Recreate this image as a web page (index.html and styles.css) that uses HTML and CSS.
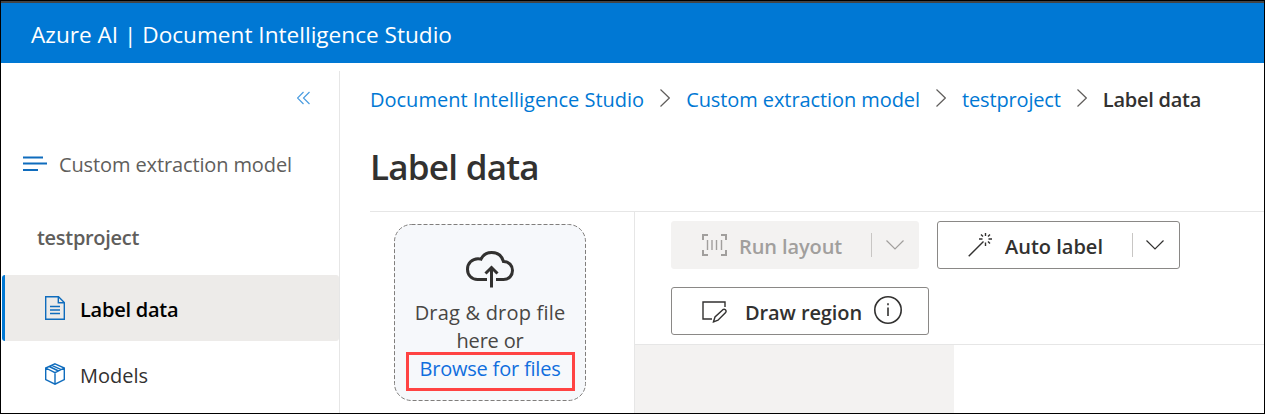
FILE: index.html
```
<!DOCTYPE html>
<html lang="en">
<head>
<meta charset="utf-8">
<title>Document Intelligence Studio</title>
<link rel="stylesheet" href="styles.css">
</head>
<body>
<div class="app">
  <header class="topbar"><span class="brand">Azure AI | Document Intelligence Studio</span></header>
  <div class="shell">
    <aside class="sidebar">
      <div class="collapse">
        <svg width="14" height="14" viewBox="0 0 14 14" class="line blue thin"><path d="M6.500 1 .5 7l6 6M12.500 1 6.500 7l6 6"/></svg>
      </div>
      <div class="model-type">
        <svg width="24" height="16" viewBox="0 0 24 16" class="line blue bars"><path d="M0 1.500h20M0 7.500h24M0 14h15"/></svg>
        <span class="t-type">Custom extraction model</span>
      </div>
      <div class="project">testproject</div>
      <nav class="nav">
        <a class="nav-item active">
          <svg width="20" height="24" viewBox="0 0 20 24" class="line blue"><path d="M.7.7H13.5L19.3 6.5V23.3H.7ZM13.3.7V6.7H19.3M5 10.500H15M5 14H15M5 17.500H15"/></svg>
          <span class="t-active">Label data</span>
        </a>
        <a class="nav-item">
          <svg width="20" height="22" viewBox="0 0 20 22" class="line blue"><path d="M10 .8 19.3 5V16.5L10 21.2.7 16.5V5ZM.7 5 10 9.7 19.3 5M10 9.700V21.200M4.200 3.500 13.500 8M6.800 2.300 16.200 6.700"/></svg>
          <span class="t-models">Models</span>
        </a>
      </nav>
    </aside>
    <main class="main">
      <div class="crumbs">
        <a class="c1">Document Intelligence Studio</a>
        <svg width="10" height="18" viewBox="0 0 10 18" class="line gray thin"><path d="M.5.5 9.3 9 .5 17.5"/></svg>
        <a class="c2">Custom extraction model</a>
        <svg width="10" height="18" viewBox="0 0 10 18" class="line gray thin"><path d="M.5.5 9.3 9 .5 17.5"/></svg>
        <a class="c3">testproject</a>
        <svg width="10" height="18" viewBox="0 0 10 18" class="line gray thin"><path d="M.5.5 9.3 9 .5 17.5"/></svg>
        <span class="current">Label data</span>
      </div>
      <h1 class="title">Label data</h1>
      <div class="workspace">
        <section class="files">
          <div class="drop">
            <svg class="outline" width="192" height="177" viewBox="0 0 192 177"><rect x=".5" y=".5" width="191" height="176" rx="17"/></svg>
            <svg width="48" height="37" viewBox="0 0 48 37" class="cloud"><path d="M21 28.5H11.500C5.500 28.500 1.500 24 1.500 18.200S6 7.700 12 7.700c1.200 0 2.200.2 3 .5C17 4 21 1.500 25.500 1.500c6 0 10.500 3.500 12 9 5.500 0 9 4 9 9s-3.500 9-9 9H30"/><path d="M25.500 36.500V17M19.500 22.500 25.500 16.500 31.500 22.500"/></svg>
            <div class="drop-text drag">Drag &amp; drop file</div>
            <div class="drop-text here">here or</div>
            <a class="browse">Browse for files</a>
          </div>
        </section>
        <section class="editor">
          <div class="tools">
            <button class="btn disabled">
              <svg width="25" height="22" viewBox="0 0 25 22" class="line scan"><path class="corners" d="M6 1H1v5M19 1h5v5M6 21H1v-5M19 21h5v-5"/><path d="M5.500 6v10M10 6v10M14.500 6v10M19.500 6v10"/></svg>
              <span class="t-run">Run layout</span>
              <i class="split"></i>
              <svg width="18" height="10" viewBox="0 0 18 10" class="line thin"><path d="M.5.5 9 9 17.500.5"/></svg>
            </button>
            <button class="btn auto">
              <svg width="25" height="25" viewBox="0 0 25 25" class="line wand"><path d="M.7 24.300 15.500 9.500M17.500 1v3M17.500 10.500v3.500M11 7h3.500M20.500 7H24M13 2.500l2 2M22 2.500l-2 2M20 9.500l2 2"/></svg>
              <span class="t-auto">Auto label</span>
              <i class="split"></i>
              <svg width="18" height="10" viewBox="0 0 18 10" class="line thin"><path d="M.5.5 9 9 17.500.5"/></svg>
            </button>
            <button class="btn draw">
              <svg width="25" height="22" viewBox="0 0 25 22" class="line pen"><path d="M10 18H1V1H23V6M11.500 20.800 13 16 20.800 8.700c1.900-1.300 4.200.8 2.800 2.800L16 19.200Z"/></svg>
              <span class="t-draw">Draw region</span>
              <svg width="28" height="28" viewBox="0 0 28 28" class="info"><circle cx="14" cy="14" r="13.200"/><path d="M14 11.500V20M14 7.300v2"/></svg>
            </button>
          </div>
          <div class="canvas"><div class="page"></div></div>
        </section>
      </div>
    </main>
  </div>
</div>
</body>
</html>
```
FILE: styles.css
```
* { box-sizing: border-box; }
body { margin: 0; background: #fff; font-family: "Open Sans", "Noto Sans", sans-serif; font-size: 20px; line-height: 28px; color: #323130; }
svg { display: block; flex: none; }
a { color: inherit; text-decoration: none; white-space: nowrap; }
.app { height: 414px; border: 1px solid #000; display: flex; flex-direction: column; overflow: hidden; }
.topbar { height: 62px; flex: none; border-top: 2px solid #444; background: #0078d4; color: #fff; display: flex; align-items: center; padding: 3px 0 0 30px; }
.brand { font-size: 22.600px; white-space: nowrap; }
.shell { flex: 1; min-height: 0; display: grid; grid-template-columns: 339px 1fr; }
.line { fill: none; stroke: currentColor; stroke-width: 1.400; }
.thin { stroke-width: 1.200; }
.blue { color: #0f6cbd; }
.gray { color: #605e5c; }
.bars { stroke-width: 1.900; }

.sidebar { margin-top: 8px; border-right: 1px solid #e6e6e6; }
.collapse { display: flex; justify-content: flex-end; padding: 20px 28px 0 0; }
.collapse svg { color: #4a9ce0; }
.model-type { display: flex; align-items: center; gap: 12px; padding-left: 22px; margin-top: 46px; color: #605e5c; white-space: nowrap; }
.model-type svg { margin-top: -3px; }
.t-type { letter-spacing: -0.12px; }
.project { margin: 45px 0 0 36px; font-weight: 600; color: #605e5c; letter-spacing: -0.3px; }
.nav { margin-top: 23px; }
.nav-item { height: 66px; display: flex; align-items: center; gap: 15px; padding: 4px 0 0 40px; border-left: 3px solid transparent; margin-left: 1px; border-radius: 3px; }
.nav-item svg { margin-top: -4px; }
.active { background: #edebe9; border-left-color: #0078d4; color: #000; font-weight: 600; letter-spacing: -0.25px; }

.main { padding-left: 30px; display: flex; flex-direction: column; min-width: 0; }
.crumbs { margin-top: 23px; height: 28px; display: flex; align-items: center; color: #0078d4; }
.crumbs svg { margin: -4px 16px 0 16px; }
.c2 { letter-spacing: -0.08px; }
.c3 { letter-spacing: -0.15px; }
.current { color: #323130; font-weight: 600; letter-spacing: -0.25px; }
.title { margin: 29px 0 0; height: 48px; line-height: 48px; font-size: 35px; font-weight: 600; letter-spacing: -0.75px; }
.workspace { margin-top: 20px; border-top: 1px solid #e6e6e6; flex: 1; min-height: 0; display: grid; grid-template-columns: 265px 1fr; }
.files { border-right: 1px solid #e6e6e6; padding: 12px 0 0 24px; }
.drop { position: relative; width: 192px; height: 177px; border-radius: 18px; background: #f6f8fb; padding-top: 27px; display: flex; flex-direction: column; align-items: center; color: #484644; }
.outline { position: absolute; inset: 0; fill: none; stroke: #807e7c; stroke-dasharray: 4 2; }
.cloud { fill: none; stroke: #323130; stroke-width: 3; margin-bottom: 11px; }
.drop-text { white-space: nowrap; }
.drag { letter-spacing: 0.2px; }
.here { letter-spacing: -0.2px; }
.browse { color: #106ede; border: 3px solid #ff4343; width: 169px; height: 39px; text-align: center; margin-top: -3px; line-height: 27px; letter-spacing: -0.2px; }

.editor { display: flex; flex-direction: column; min-width: 0; }
.tools { height: 132px; padding: 9px 80px 0 36px; display: flex; flex-wrap: wrap; align-content: flex-start; gap: 18px; }
.btn { width: 248px; height: 48px; border: 1px solid #8a8886; border-radius: 3px; background: #fff; color: #323130; font: 600 20px/28px "Open Sans", "Noto Sans", sans-serif; padding: 0 0 0 30px; display: flex; align-items: center; white-space: nowrap; letter-spacing: -0.1px; }
.btn span { margin-top: 4px; }
.disabled { background: #f3f2f1; border-color: #f3f2f1; color: #a19f9d; }
.disabled > span { margin-left: 12px; width: 132px; text-align: left; }
.corners { stroke-width: 2; }
.split { width: 1px; height: 24px; background: #c8c6c4; margin-right: 14px; }
.auto { width: 243px; padding-left: 30px; letter-spacing: 0; }
.auto > span { margin-left: 12px; width: 127px; text-align: left; }
.auto .split { margin-right: 13px; }
.wand { margin-top: -2px; }
.draw { width: 258px; }
.draw > span { margin-left: 18px; width: 129px; text-align: left; }
.pen { margin-top: 2px; }
.info { fill: none; stroke: currentColor; stroke-width: 1.600; margin-top: -2px; }
.canvas { flex: 1; border-top: 1px solid #e6e6e6; display: flex; }
.page { width: 319px; background: #f3f2f1; }
```
